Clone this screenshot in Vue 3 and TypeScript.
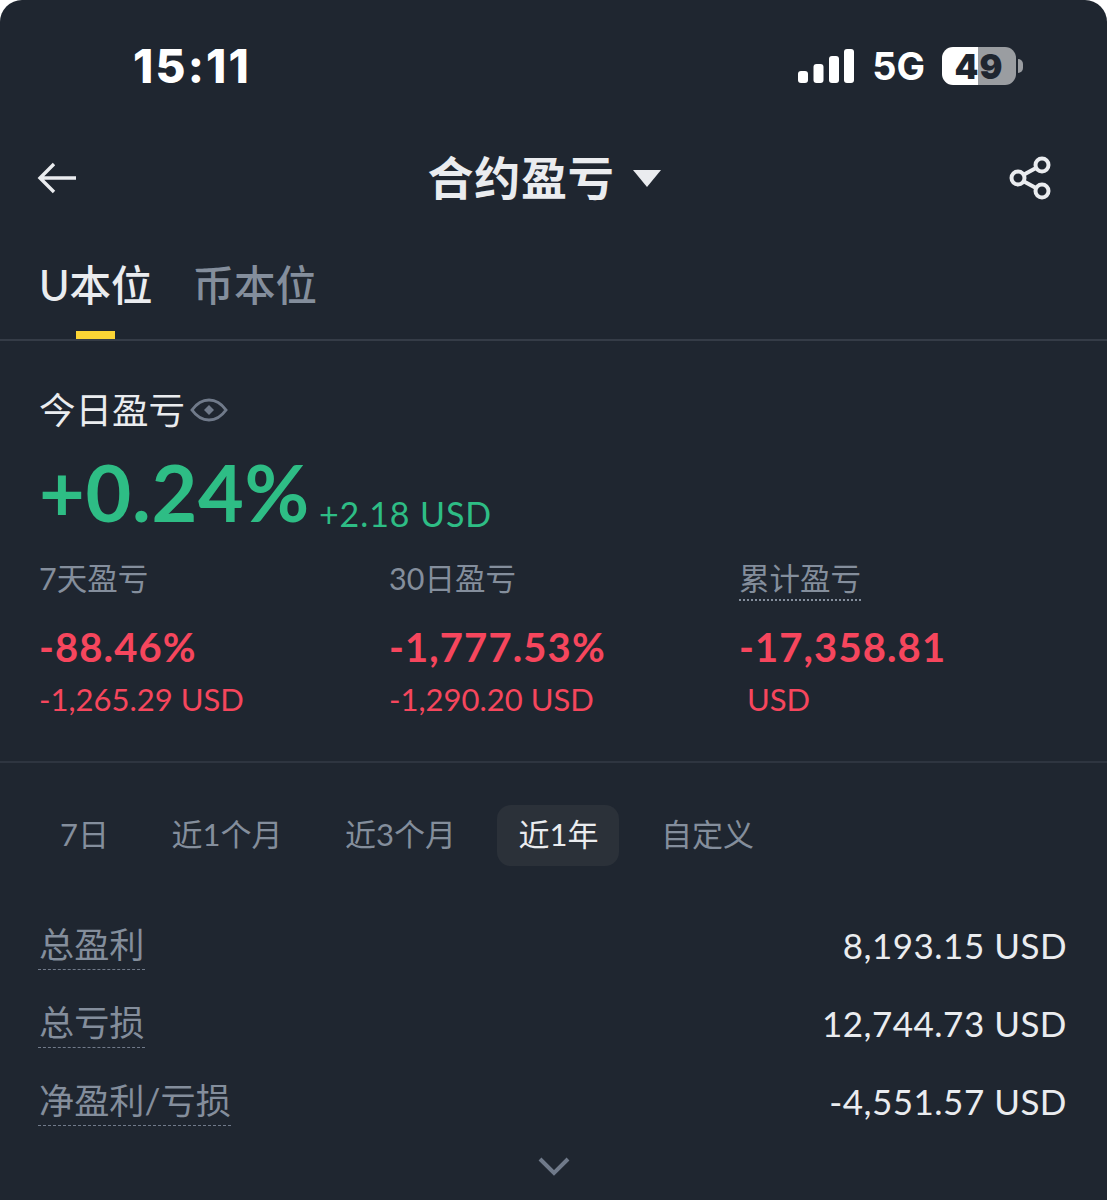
<template>
  <div class="screen">
    <div class="status">
      <span class="status__time">15:11</span>
      <div class="status__right">
        <svg class="status__signal" width="58" height="36" viewBox="0 0 58 36">
          <rect x="1" y="23" width="10" height="12" rx="3" />
          <rect x="16.500" y="16" width="10" height="19" rx="3" />
          <rect x="32" y="8" width="10" height="27" rx="3" />
          <rect x="47" y="1" width="10" height="34" rx="3" />
        </svg>
        <span class="status__net">5G</span>
        <div class="battery">
          <div class="battery__body">
            <span class="battery__level">49</span>
          </div>
          <span class="battery__cap"></span>
        </div>
      </div>
    </div>

    <header class="nav">
      <svg class="nav__back" width="40" height="32" viewBox="0 0 40 32" fill="none">
        <path d="M39 16H3M17 2L3 16l14 14" stroke="#eaecef" stroke-width="3.4" />
      </svg>
      <div class="nav__title">
        <span>合约盈亏</span>
        <i class="nav__caret"></i>
      </div>
      <svg class="nav__share" width="44" height="44" viewBox="0 0 44 44" fill="none" stroke="#eaecef" stroke-width="4">
        <circle cx="9" cy="22" r="6.5" />
        <circle cx="33" cy="9" r="6.5" />
        <circle cx="33" cy="35" r="6.5" />
        <path d="M15 18.500L27 12M15 25.500L27 32" />
      </svg>
    </header>

    <div class="tabs">
      <div class="tabs__item tabs__item--active">U本位<i class="tabs__bar"></i></div>
      <div class="tabs__item">币本位</div>
    </div>

    <section class="summary">
      <div class="today">
        <span>今日盈亏</span>
        <svg width="38" height="24" viewBox="0 0 38 24" fill="none">
          <path d="M2 12C7 5 12.500 2 19 2s12 3 17 10c-5 7-10.500 10-17 10S7 19 2 12z" stroke="#707a8a" stroke-width="3" />
          <path d="M19 7l5 5-5 5-5-5z" fill="#707a8a" />
        </svg>
      </div>
      <div class="today__value">
        <span class="today__pct">+0.24%</span>
        <span class="today__usd">+2.18 USD</span>
      </div>
      <div class="stats">
        <div v-for="s in stats" :key="s.label" class="stat">
          <div class="stat__label"><span :class="{ dotted: s.dotted }">{{ s.label }}</span></div>
          <div class="stat__pct">{{ s.top }}</div>
          <div class="stat__usd" :class="{ 'stat__usd--indent': s.indent }">{{ s.bottom }}</div>
        </div>
      </div>
    </section>

    <div class="ranges">
      <span v-for="r in ranges" :key="r" class="ranges__item" :class="{ 'ranges__item--active': r === '近1年' }">{{ r }}</span>
    </div>

    <div class="rows">
      <div v-for="row in rows" :key="row.label" class="row">
        <span class="row__label">{{ row.label }}</span>
        <span class="row__value">{{ row.value }}</span>
      </div>
    </div>

    <div class="more">
      <svg width="32" height="20" viewBox="0 0 32 20" fill="none">
        <path d="M2 2l14 14L30 2" stroke="#707a8a" stroke-width="4" />
      </svg>
    </div>
  </div>
</template>

<script setup lang="ts">
interface Stat {
  label: string
  top: string
  bottom: string
  dotted?: boolean
  indent?: boolean
}

const stats: Stat[] = [
  { label: '7天盈亏', top: '-88.46%', bottom: '-1,265.29 USD' },
  { label: '30日盈亏', top: '-1,777.53%', bottom: '-1,290.20 USD' },
  { label: '累计盈亏', top: '-17,358.81', bottom: 'USD', dotted: true, indent: true },
]

const ranges = ['7日', '近1个月', '近3个月', '近1年', '自定义']

const rows = [
  { label: '总盈利', value: '8,193.15 USD' },
  { label: '总亏损', value: '12,744.73 USD' },
  { label: '净盈利/亏损', value: '-4,551.57 USD' },
]
</script>

<style>
html,
body {
  background: #ffffff;
}
</style>

<style scoped>
.screen {
  width: 1107px;
  height: 1200px;
  overflow: hidden;
  background: #1f2630;
  border-radius: 22px 22px 0 0;
  color: #eaecef;
  font-family: Lato, "Noto Sans CJK SC", sans-serif;
}

.status {
  display: flex;
  align-items: center;
  justify-content: space-between;
  height: 132px;
  padding: 0 84px 0 133px;
  box-sizing: border-box;
  color: #ffffff;
}

.status__time {
  font-family: Inter, sans-serif;
  font-size: 46px;
  font-weight: 800;
  letter-spacing: 2.2px;
}

.status__right {
  display: flex;
  align-items: center;
}

.status__signal {
  fill: #ffffff;
}

.status__net {
  margin-left: 17px;
  font-family: Inter, sans-serif;
  font-size: 38px;
  font-weight: 700;
}

.battery {
  display: flex;
  align-items: center;
  margin-left: 17px;
}

.battery__body {
  display: flex;
  align-items: center;
  justify-content: center;
  width: 74px;
  height: 38px;
  border-radius: 11px;
  background: linear-gradient(90deg, #ffffff 49%, #9a9da1 49%);
}

.battery__level {
  color: #1f2630;
  font-family: Inter, sans-serif;
  font-size: 34px;
  font-weight: 900;
  letter-spacing: 1px;
}

.battery__cap {
  width: 5px;
  height: 14px;
  margin-left: 2px;
  border-radius: 0 7px 7px 0;
  background: #9a9da1;
}

.nav {
  display: flex;
  align-items: center;
  justify-content: space-between;
  height: 92px;
  padding: 0 54px 0 37px;
}

.nav__title {
  display: flex;
  align-items: center;
  gap: 18px;
  margin-left: 2px;
  font-size: 46px;
  font-weight: 700;
  letter-spacing: 0.8px;
  line-height: 1;
}

.nav__caret {
  width: 0;
  height: 0;
  border-top: 17px solid #eaecef;
  border-left: 14px solid transparent;
  border-right: 14px solid transparent;
}

.tabs {
  display: flex;
  gap: 40px;
  height: 117px;
  padding: 0 39px;
  box-sizing: border-box;
  border-bottom: 2px solid #353c47;
  color: #848e9c;
  font-size: 41.500px;
  font-weight: 500;
  line-height: 1;
}

.tabs__item {
  position: relative;
  padding-top: 41px;
}

.tabs__item--active {
  color: #eaecef;
}

.tabs__bar {
  position: absolute;
  left: 37px;
  bottom: 0;
  width: 39px;
  height: 8px;
  background: #fcd535;
}

.summary {
  height: 422px;
  padding: 0 39px;
  box-sizing: border-box;
  border-bottom: 2px solid #2e3540;
}

.today {
  display: flex;
  align-items: center;
  gap: 5px;
  padding-top: 46px;
  font-size: 36.500px;
  line-height: 46px;
}

.today__value {
  display: flex;
  align-items: flex-end;
  gap: 9px;
  margin-top: 17px;
  color: #2ebd85;
}

.today__pct {
  font-size: 79px;
  font-weight: 700;
  letter-spacing: 0.7px;
  line-height: 84px;
}

.today__usd {
  font-size: 34px;
  letter-spacing: 0.9px;
  line-height: 41px;
}

.stats {
  display: grid;
  grid-template-columns: repeat(3, 350px);
  margin-top: 23px;
}

.stat__label {
  height: 42px;
  color: #848e9c;
  font-size: 30.500px;
  line-height: 42px;
}

.dotted {
  display: inline-block;
  border-bottom: 2px dotted #848e9c;
}

.stat__pct {
  margin-top: 23px;
  color: #f6465d;
  font-size: 40px;
  font-weight: 700;
  letter-spacing: 1.1px;
  line-height: 50px;
}

.stat__usd {
  margin-top: 5px;
  color: #f6465d;
  font-size: 31px;
  line-height: 44px;
}

.stat__usd--indent {
  padding-left: 8px;
}

.ranges {
  display: flex;
  align-items: center;
  gap: 20.500px;
  height: 61px;
  margin-top: 42px;
  padding-left: 39px;
  color: #848e9c;
  font-size: 31px;
}

.ranges__item {
  padding: 0 21px 2px;
  line-height: 59px;
}

.ranges__item--active {
  border-radius: 14px;
  background: #2b3139;
  color: #eaecef;
}

.rows {
  margin-top: 40px;
  padding: 0 38px;
}

.row {
  display: flex;
  align-items: center;
  justify-content: space-between;
  height: 78px;
}

.row__label {
  padding-left: 1px;
  border-bottom: 1.500px dashed #707a8a;
  color: #848e9c;
  font-size: 35.200px;
  line-height: 49px;
}

.row__value {
  margin-right: 2px;
  font-size: 35px;
  letter-spacing: 0.5px;
}

.more {
  display: flex;
  justify-content: center;
  margin-top: 17px;
}
</style>
